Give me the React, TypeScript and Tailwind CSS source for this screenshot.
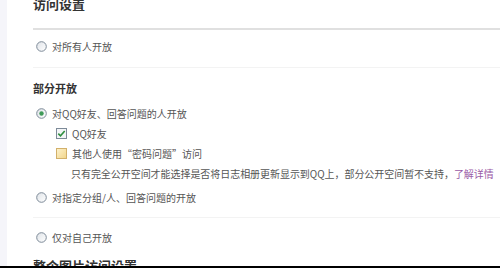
import React from 'react';

const font = { fontFamily: '"Noto Sans CJK SC", "Liberation Sans", sans-serif' };

function Radio({ checked = false }: { checked?: boolean }) {
  return (
    <svg width="11" height="11" viewBox="0 0 11 11" className="shrink-0">
      <defs>
        <linearGradient id={checked ? 'rg1' : 'rg0'} x1="0" y1="0" x2="1" y2="1">
          <stop offset="0" stopColor="#dfe3e8" />
          <stop offset="1" stopColor="#ffffff" />
        </linearGradient>
      </defs>
      <circle cx="5.5" cy="5.5" r="4.8" fill={`url(#${checked ? 'rg1' : 'rg0'})`} stroke="#7d8a98" strokeWidth="1" />
      {checked && <circle cx="5.5" cy="5.5" r="2.2" fill="#3f9a58" />}
    </svg>
  );
}

function Check({ checked = false, hover = false }: { checked?: boolean; hover?: boolean }) {
  return (
    <svg width="11" height="11" viewBox="0 0 11 11" className="shrink-0">
      <defs>
        <linearGradient id="cbh" x1="0" y1="0" x2="1" y2="1">
          <stop offset="0" stopColor="#fdf2cc" />
          <stop offset="1" stopColor="#f1d48a" />
        </linearGradient>
      </defs>
      <rect x="0.5" y="0.5" width="10" height="10" fill={hover ? 'url(#cbh)' : '#f3f5f7'} stroke={hover ? '#d2b06a' : '#7d8a98'} />
      {checked && <path d="M2.3 5.6 L4.5 7.8 L8.7 3" fill="none" stroke="#2f8f3f" strokeWidth="1.6" />}
    </svg>
  );
}

export default function App() {
  return (
    <div className="flex h-[268px] w-[500px] overflow-hidden border-b-2 border-black bg-white box-border" style={font}>
      <div className="w-[7px] shrink-0 bg-[#f5f5fa]" />
      <div className="flex-1 pl-[26px] text-[10px] text-[#555]">
        <div className="mt-[-6px] h-[20px] leading-[20px] text-[13px] font-bold text-[#333]">访问设置</div>
        <div className="mt-[14px] h-[2px] bg-[#e0e0e0]" />
        <div className="flex h-[32px] items-center gap-[5px] pl-[3px]">
          <Radio />
          <span>对所有人开放</span>
        </div>
        <div className="mt-[5px] h-px bg-[#f3f3f3]" />
        <div className="mt-[10px] flex h-[20px] items-center text-[11px] font-bold text-[#333]">部分开放</div>
        <div className="mt-[5px] flex h-[20px] items-center gap-[5px] pl-[3px]">
          <Radio checked />
          <span>对QQ好友、回答问题的人开放</span>
        </div>
        <div className="flex h-[20px] items-center gap-[5px] pl-[23px]">
          <Check checked />
          <span>QQ好友</span>
        </div>
        <div className="flex h-[20px] items-center gap-[5px] pl-[23px]">
          <Check hover />
          <span>其他人使用“密码问题”访问</span>
        </div>
        <div className="flex h-[20px] items-center whitespace-nowrap pl-[38px] tracking-[-0.05px]">
          <span>只有完全公开空间才能选择是否将日志相册更新显示到QQ上，部分公开空间暂不支持，</span>
          <a className="text-[#9a5aa6]">了解详情</a>
        </div>
        <div className="mt-[4px] flex h-[20px] items-center gap-[5px] pl-[3px]">
          <Radio />
          <span>对指定分组/人、回答问题的开放</span>
        </div>
        <div className="mt-[10px] h-px bg-[#f3f3f3]" />
        <div className="mt-[9px] flex h-[20px] items-center gap-[5px] pl-[3px]">
          <Radio />
          <span>仅对自己开放</span>
        </div>
        <div className="mt-[9px] flex h-[20px] items-center text-[13px] font-bold text-[#333]">整个图片访问设置</div>
      </div>
    </div>
  );
}
